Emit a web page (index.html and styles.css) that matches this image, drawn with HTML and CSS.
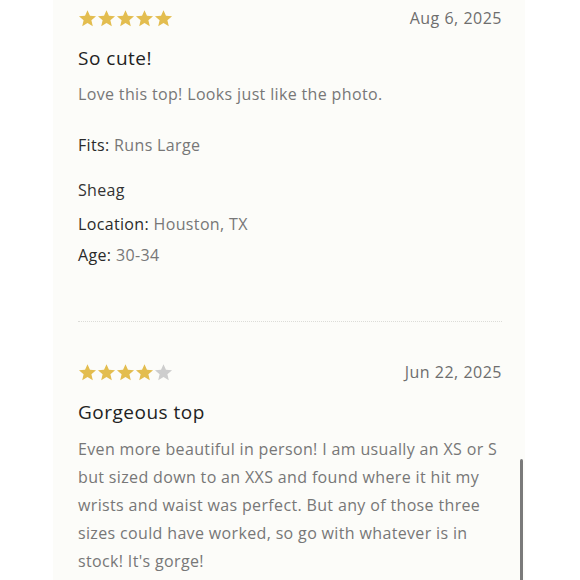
FILE: index.html
```html
<!DOCTYPE html>
<html lang="en">
<head>
    <meta charset="UTF-8">
    <meta name="viewport" content="width=device-width, initial-scale=1.0">
    <title>Reviews</title>
    <link rel="stylesheet" href="styles.css">
</head>
<body>
    <div class="panel">
        <div class="review">
            <div class="review-top">
                <div class="stars">
                    <svg class="star on" viewBox="0 0 24 24"><path d="M12 1.5l3.1 7.1 7.7.6-5.9 5.1 1.8 7.6L12 17.8l-6.7 4.1 1.8-7.6-5.9-5.1 7.7-.6z"/></svg>
                    <svg class="star on" viewBox="0 0 24 24"><path d="M12 1.5l3.1 7.1 7.7.6-5.9 5.1 1.8 7.6L12 17.8l-6.7 4.1 1.8-7.6-5.9-5.1 7.7-.6z"/></svg>
                    <svg class="star on" viewBox="0 0 24 24"><path d="M12 1.5l3.1 7.1 7.7.6-5.9 5.1 1.8 7.6L12 17.8l-6.7 4.1 1.8-7.6-5.9-5.1 7.7-.6z"/></svg>
                    <svg class="star on" viewBox="0 0 24 24"><path d="M12 1.5l3.1 7.1 7.7.6-5.9 5.1 1.8 7.6L12 17.8l-6.7 4.1 1.8-7.6-5.9-5.1 7.7-.6z"/></svg>
                    <svg class="star on" viewBox="0 0 24 24"><path d="M12 1.5l3.1 7.1 7.7.6-5.9 5.1 1.8 7.6L12 17.8l-6.7 4.1 1.8-7.6-5.9-5.1 7.7-.6z"/></svg>
                </div>
                <span class="date">Aug 6, 2025</span>
            </div>
            <h3 class="title">So cute!</h3>
            <p class="body">Love this top! Looks just like the photo.</p>
            <p class="fits"><span class="label">Fits:</span> Runs Large</p>
            <p class="author">Sheag</p>
            <p class="meta"><span class="label">Location:</span> Houston, TX</p>
            <p class="meta"><span class="label">Age:</span> 30-34</p>
        </div>

        <div class="review second">
            <div class="review-top">
                <div class="stars">
                    <svg class="star on" viewBox="0 0 24 24"><path d="M12 1.5l3.1 7.1 7.7.6-5.9 5.1 1.8 7.6L12 17.8l-6.7 4.1 1.8-7.6-5.9-5.1 7.7-.6z"/></svg>
                    <svg class="star on" viewBox="0 0 24 24"><path d="M12 1.5l3.1 7.1 7.7.6-5.9 5.1 1.8 7.6L12 17.8l-6.7 4.1 1.8-7.6-5.9-5.1 7.7-.6z"/></svg>
                    <svg class="star on" viewBox="0 0 24 24"><path d="M12 1.5l3.1 7.1 7.7.6-5.9 5.1 1.8 7.6L12 17.8l-6.7 4.1 1.8-7.6-5.9-5.1 7.7-.6z"/></svg>
                    <svg class="star on" viewBox="0 0 24 24"><path d="M12 1.5l3.1 7.1 7.7.6-5.9 5.1 1.8 7.6L12 17.8l-6.7 4.1 1.8-7.6-5.9-5.1 7.7-.6z"/></svg>
                    <svg class="star off" viewBox="0 0 24 24"><path d="M12 1.5l3.1 7.1 7.7.6-5.9 5.1 1.8 7.6L12 17.8l-6.7 4.1 1.8-7.6-5.9-5.1 7.7-.6z"/></svg>
                </div>
                <span class="date">Jun 22, 2025</span>
            </div>
            <h3 class="title">Gorgeous top</h3>
            <p class="body long">Even more beautiful in person! I am usually an XS or S but sized down to an XXS and found where it hit my wrists and waist was perfect. But any of those three sizes could have worked, so go with whatever is in stock! It's gorge!</p>
        </div>
    </div>
    <div class="scrollbar"></div>
</body>
</html>
```

FILE: styles.css
```css
body {
    margin: 0;
    background: #ffffff;
    font-family: "Open Sans", "Noto Sans", sans-serif;
    overflow: hidden;
}
.panel {
    margin-left: 53px;
    width: 472px;
    height: 580px;
    overflow: hidden;
    background: #fcfcf9;
    padding: 8px 23px 0 25px;
    box-sizing: border-box;
}
.review {
    padding-bottom: 55px;
}
.review.second {
    border-top: 1px dotted #dcdcd8;
    padding-top: 40px;
}
.review-top {
    display: flex;
    justify-content: space-between;
    align-items: center;
    height: 20px;
}
.stars {
    display: flex;
}
.star {
    width: 19px;
    height: 19px;
}
.star.on { fill: #e3bd4f; }
.star.off { fill: #cdcdcd; }
.date {
    font-size: 16px;
    color: #6e6e6e;
    letter-spacing: 0.5px;
}
.title {
    margin: 17px 0 0;
    font-size: 19px;
    font-weight: 400;
    color: #222;
    letter-spacing: 0.5px;
    line-height: 26px;
}
.body {
    margin: 12px 0 0;
    font-size: 16px;
    color: #777;
    letter-spacing: 0.35px;
    line-height: 22px;
}
.body.long {
    margin-top: 10px;
    line-height: 28px;
}
.fits {
    margin: 29px 0 0;
    font-size: 16px;
    color: #777;
    letter-spacing: 0.35px;
    line-height: 22px;
}
.author {
    margin: 23px 0 0;
    font-size: 16px;
    color: #333;
    letter-spacing: 0.35px;
    line-height: 22px;
}
.meta {
    margin: 12px 0 0;
    font-size: 16px;
    color: #777;
    letter-spacing: 0.35px;
    line-height: 22px;
}
.meta + .meta {
    margin-top: 9px;
}
.label {
    color: #2a2a2a;
}
.scrollbar {
    position: absolute;
    left: 520px;
    top: 459px;
    width: 3px;
    height: 121px;
    border-radius: 2px 2px 0 0;
    background: #7a7a7a;
}
```
